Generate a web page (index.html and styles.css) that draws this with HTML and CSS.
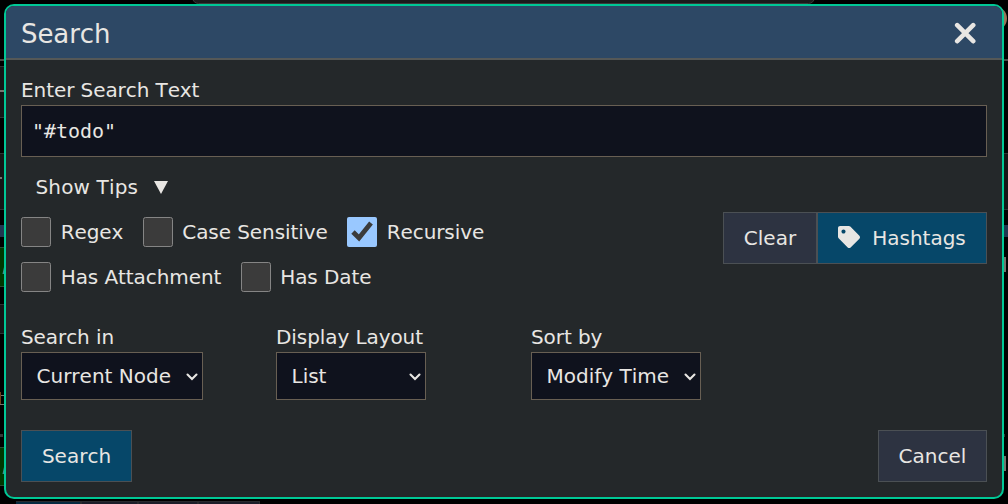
FILE: index.html
```html
<!DOCTYPE html>
<html lang="en">
<head>
<meta charset="utf-8">
<title>Search</title>
<link rel="stylesheet" href="styles.css">
</head>
<body>
<svg class="backdrop" width="1008" height="504" viewBox="0 0 1008 504" shape-rendering="crispEdges" aria-hidden="true">
  <rect x="192.5" y="-20" width="622" height="23.500" rx="6" fill="#1b1b1b" stroke="#3a3a3a" shape-rendering="auto"/>
  <circle cx="995" cy="18.500" r="12" fill="#9a7359" shape-rendering="auto"/>
  <path fill="#4a4946" d="M0 59h4v2H0zM1004 59h4v2h-4z"/>
  <path fill="#151617" d="M0 66h4v51H0zM0 153h4v56H0zM0 304h4v29H0zM1004 153h4v56h-4z"/>
  <path fill="#303234" d="M0 66h4v1H0zM0 117h4v1H0zM0 153h4v1H0zM0 209h4v1H0zM0 304h4v1H0zM0 333h4v1H0zM1004 153h4v1h-4zM1004 209h4v1h-4z"/>
  <path fill="#777570" d="M0 90h4v2H0zM0 177h2v2H0zM0 395h4v1H0zM0 404h4v1H0z"/>
  <path fill="#213650" d="M0 225h4v12H0zM1004 225h4v12h-4z"/>
  <path fill="#003600" d="M0 247h4v39H0zM0 447h4v39H0z"/>
  <path fill="#294a31" d="M0 247h4v1H0zM0 286h4v1H0zM0 447h4v1H0zM0 485h4v1H0z"/>
  <path fill="#3b8e91" shape-rendering="auto" d="M4 267v7H2.500zM4 467v7H2.500z"/>
  <path fill="#704018" d="M0 392h1v12H0z"/>
  <path fill="#353738" d="M0 434h3v3H0zM1004 434h1v3h-1z"/>
  <path fill="#77716d" d="M1004 257h2v15h-2zM1004 456h2v15h-2z"/>
  <path fill="#062b40" d="M16 501h64v3H16z"/>
  <path fill="#1b1e29" d="M82 501h178v3H82z"/>
  <path fill="#282b2e" d="M16 501h244v1H16zM80 501h2v3h-2zM137 501h2v3h-2zM197 501h2v3h-2zM259 501h1v3h-1z"/>
</svg>
<main class="dialog">
  <header class="dialog-header">
    <h1 class="dialog-title">Search</h1>
    <svg class="close-icon" width="22" height="22" viewBox="0 0 22 22" role="img" aria-label="Close"><path d="M3.200 3.200L19.200 19.200M19.200 3.200L3.200 19.200"/></svg>
  </header>
  <section class="dialog-body">
    <label class="field-label" for="query">Enter Search Text</label>
    <input class="query" id="query" type="text" value="&quot;#todo&quot;">
    <div class="tips"><span>Show Tips</span><svg width="14" height="13" viewBox="0 0 14 13"><path d="M0 0h14L7 13z"/></svg></div>
    <div class="options-row">
      <div class="options">
        <div class="option-line">
          <label class="option"><input class="check" type="checkbox">Regex</label>
          <label class="option"><input class="check" type="checkbox">Case Sensitive</label>
          <label class="option"><input class="check" type="checkbox" checked>Recursive</label>
        </div>
        <div class="option-line">
          <label class="option"><input class="check" type="checkbox">Has Attachment</label>
          <label class="option"><input class="check" type="checkbox">Has Date</label>
        </div>
      </div>
      <div class="button-group">
        <button class="btn clear">Clear</button>
        <button class="btn primary hashtags"><svg class="tag-icon" width="22" height="22" viewBox="0 0 512 512"><path fill-rule="evenodd" d="M0 252.118V48C0 21.490 21.490 0 48 0h204.118a48 48 0 0 1 33.941 14.059l211.882 211.882c18.745 18.745 18.745 49.137 0 67.882L293.823 497.941c-18.745 18.745-49.137 18.745-67.882 0L14.059 286.059A48 48 0 0 1 0 252.118zM128 80c-26.510 0-48 21.490-48 48s21.490 48 48 48 48-21.490 48-48-21.490-48-48-48z"/></svg>Hashtags</button>
      </div>
    </div>
    <div class="selects">
      <div class="field"><label class="field-label" for="scope">Search in</label><div class="select-box scope"><select class="select" id="scope"><option>Current Node</option></select><svg class="chevron" width="12" height="8" viewBox="0 0 12 8"><path d="M1.500 1.500L6 6L10.500 1.500"/></svg></div></div>
      <div class="field"><label class="field-label" for="layout">Display Layout</label><div class="select-box layout"><select class="select" id="layout"><option>List</option></select><svg class="chevron" width="12" height="8" viewBox="0 0 12 8"><path d="M1.500 1.500L6 6L10.500 1.500"/></svg></div></div>
      <div class="field"><label class="field-label" for="sort">Sort by</label><div class="select-box sort"><select class="select" id="sort"><option>Modify Time</option></select><svg class="chevron" width="12" height="8" viewBox="0 0 12 8"><path d="M1.500 1.500L6 6L10.500 1.500"/></svg></div></div>
    </div>
    <footer class="actions">
      <button class="btn primary search">Search</button>
      <button class="btn cancel">Cancel</button>
    </footer>
  </section>
</main>
</body>
</html>
```
FILE: styles.css
```css
* { box-sizing: border-box; }
html { color-scheme: dark; }
body {
  margin: 0;
  height: 504px;
  padding: 4px;
  overflow: hidden;
  background: #000;
  color: #e8e6e3;
  font: 20px/30px "DejaVu Sans", Verdana, sans-serif;
  font-kerning: none;
  letter-spacing: -0.08px;
}
.backdrop { position: absolute; left: 0; top: 0; }
.dialog {
  position: relative;
  height: 495px;
  border: 2px solid #00c896;
  border-radius: 10px;
  overflow: hidden;
  background: #24282a;
}
.dialog-header {
  display: flex;
  align-items: center;
  justify-content: space-between;
  height: 54px;
  padding: 0 26px 0 15px;
  border-bottom: 2px solid #555857;
  background: #2d4865;
}
.dialog-title { margin: 0; padding-top: 3px; font-size: 26px; font-weight: 400; }
.close-icon { margin-top: 1px; fill: none; stroke: #e8e6e3; stroke-width: 4.6; stroke-linecap: round; }
.dialog-body { padding: 15px; }
.field-label { display: block; height: 30px; }
.query {
  display: block;
  width: 100%;
  height: 52px;
  padding: 0 10px;
  border: 1px solid #685f53;
  background: #0f121d;
  color: #e8e6e3;
  font: 20px/30px "DejaVu Sans Mono", monospace;
  letter-spacing: -0.05px;
}
.tips { display: flex; align-items: center; gap: 16px; height: 30px; margin-top: 15px; padding-left: 14.5px; letter-spacing: 0.15px; }
.tips svg { fill: #e8e6e3; }
.options-row { display: flex; justify-content: space-between; margin-top: 15px; }
.options { display: flex; flex-direction: column; gap: 15px; }
.option-line { display: flex; gap: 19.3px; }
.option { display: flex; align-items: center; height: 30px; }
.check { width: 30px; height: 30px; margin: 0 9.7px 0 0; }
.button-group { display: flex; margin-top: -5px; }
.btn {
  display: flex;
  align-items: center;
  justify-content: center;
  height: 52px;
  padding: 0;
  border: 1px solid #4b5054;
  background: #2d3341;
  color: #e8e6e3;
  font: inherit;
  font-kerning: none;
}
.primary { background: #064769; }
.clear { width: 94px; }
.hashtags { width: 170px; gap: 12px; }
.tag-icon { fill: #e8e6e3; margin-top: -3px; }
.selects { display: flex; margin-top: 30px; }
.field { width: 255px; }
.select-box {
  display: flex;
  align-items: center;
  height: 48px;
  padding-right: 4px;
  border: 1px solid #685f53;
  background: #0f121d;
}
.select {
  appearance: none;
  flex: 1;
  min-width: 0;
  height: 46px;
  padding: 0 0 0 14.5px;
  border: 0;
  background: transparent;
  color: #e8e6e3;
  font: inherit;
  font-kerning: none;
}
.chevron { flex: none; margin-top: 2px; fill: none; stroke: #e8e6e3; stroke-width: 2.1; stroke-linecap: round; }
.scope { width: 182px; }
.layout { width: 150px; }
.sort { width: 170px; }
.actions { display: flex; justify-content: space-between; margin-top: 30px; }
.search { width: 111px; }
.cancel { width: 109px; }
```
